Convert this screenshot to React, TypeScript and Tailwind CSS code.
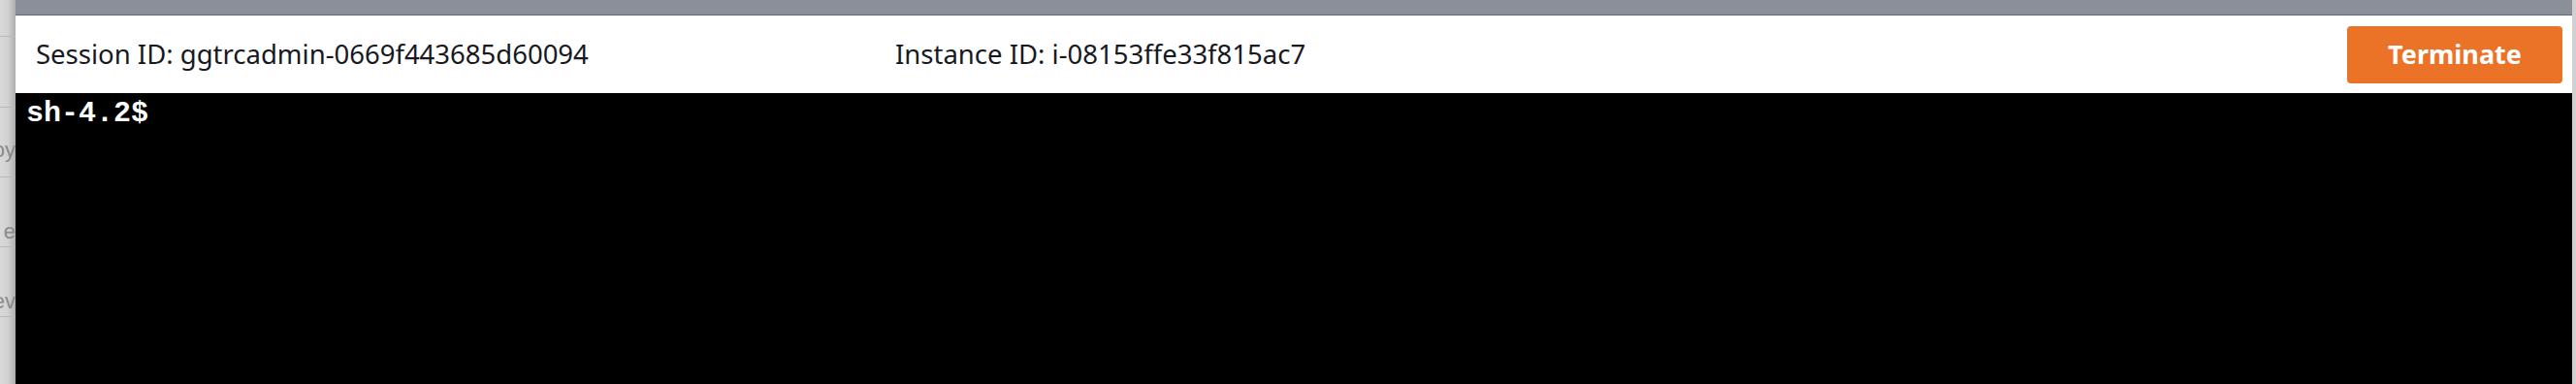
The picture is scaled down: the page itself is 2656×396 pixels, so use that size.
export default function App() {
  return (
    <div className="flex h-[396px] w-[2656px] overflow-hidden bg-[#d6d6d6]">
      {/* left page edge behind the modal */}
      <div className="relative w-[16px] shrink-0 overflow-hidden bg-gradient-to-r from-[#d9d9d9] via-[#d2d2d2] to-[#aeaeae] font-['Liberation_Sans',sans-serif] text-[22px] text-[#8a8a8a]">
        <div className="h-[38px] border-b border-[#b9b9b9]" />
        <div className="flex h-[73px] items-end justify-end border-b border-[#b9b9b9] leading-[1]">
          <span className="mb-[-56px] whitespace-nowrap">oy</span>
        </div>
        <div className="h-[72px] border-b border-[#b9b9b9]" />
        <div className="flex h-[72px] items-center justify-end border-b border-[#b9b9b9]">
          <span className="mt-[40px] whitespace-nowrap">e</span>
        </div>
        <div className="flex h-[72px] items-center justify-end border-b border-[#b9b9b9]">
          <span className="mt-[40px] whitespace-nowrap">ev</span>
        </div>
      </div>

      <div className="flex min-w-0 flex-1 flex-col">
        {/* grey title strip */}
        <div className="h-[16px] shrink-0 border-b border-[#646b74] bg-[#8b9098]" />

        {/* session header */}
        <div className="flex h-[80px] shrink-0 items-center bg-white pl-[21px] pr-[10px] font-['Noto_Sans',sans-serif] text-[27.5px] text-[#16191f]">
          <span className="w-[886px] shrink-0 whitespace-nowrap">Session ID: ggtrcadmin-0669f443685d60094</span>
          <span className="whitespace-nowrap">Instance ID: i-08153ffe33f815ac7</span>
          <button className="ml-auto flex h-[59px] w-[222px] items-center justify-center rounded-[4px] bg-[#eb7328] text-[27px] font-bold text-white">
            Terminate
          </button>
        </div>

        {/* terminal */}
        <div className="flex-1 bg-black px-[11px] pt-[3px] font-['Liberation_Mono',monospace] text-[30px] font-bold leading-[1.2] text-white">
          sh-4.2$
        </div>
      </div>

      {/* right page edge */}
      <div className="w-[4px] shrink-0 bg-[#d0d0d0]" />
    </div>
  );
}
